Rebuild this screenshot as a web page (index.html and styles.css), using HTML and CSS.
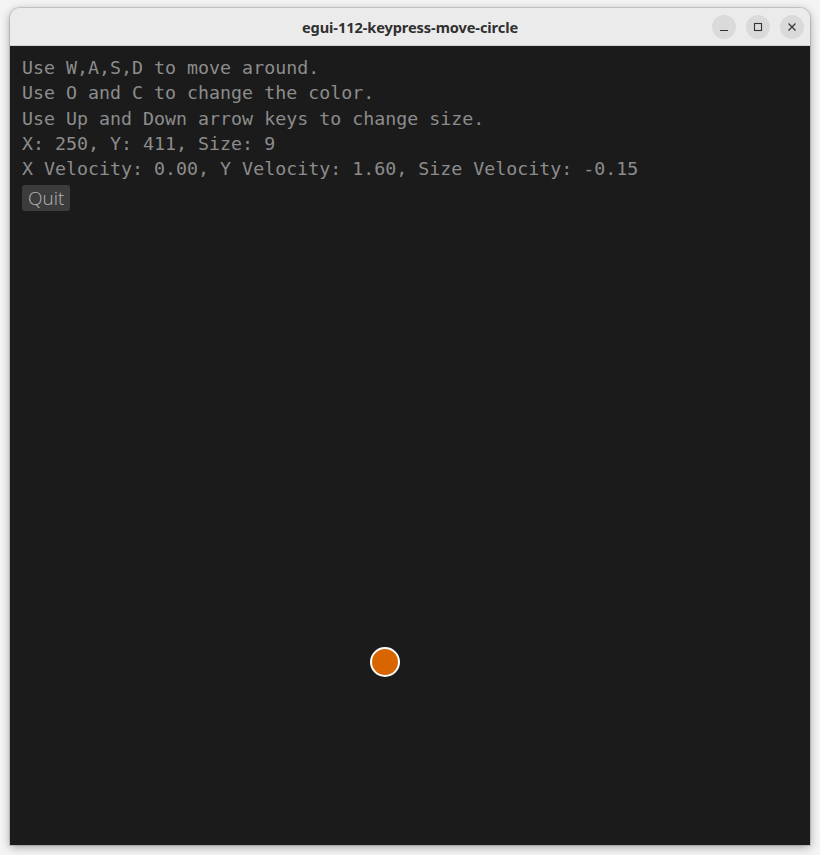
FILE: index.html
```html
<!DOCTYPE html>
<html>
<head>
<meta charset="utf-8">
<link rel="stylesheet" href="styles.css">
</head>
<body>
<div class="window">
  <div class="titlebar">
    <div class="title">egui-112-keypress-move-circle</div>
    <div class="controls">
      <div class="ctl"><svg width="10" height="10" viewBox="0 0 10 10"><path d="M1 8.5H9" stroke="#333" stroke-width="1.2"/></svg></div>
      <div class="ctl"><svg width="10" height="10" viewBox="0 0 10 10"><rect x="1.5" y="1.5" width="7" height="7" fill="none" stroke="#333" stroke-width="1.1"/></svg></div>
      <div class="ctl"><svg width="10" height="10" viewBox="0 0 10 10"><path d="M1.5 1.5L8.5 8.5M8.5 1.5L1.5 8.5" stroke="#333" stroke-width="1.2"/></svg></div>
    </div>
  </div>
  <div class="content">
    <div class="lines">
      <div>Use W,A,S,D to move around.</div>
      <div>Use O and C to change the color.</div>
      <div>Use Up and Down arrow keys to change size.</div>
      <div>X: 250, Y: 411, Size: 9</div>
      <div>X Velocity: 0.00, Y Velocity: 1.60, Size Velocity: -0.15</div>
    </div>
    <button class="quit">Quit</button>
    <div class="dot" style="left:360px; top:601px;"></div>
  </div>
</div>
</body>
</html>
```
FILE: styles.css
```css
html, body {
  margin: 0;
  padding: 0;
  background: #f4f4f4;
  width: 820px;
  height: 855px;
  overflow: hidden;
}
.window {
  position: relative;
  margin: 8px 0 0 10px;
  width: 800px;
  height: 837px;
  border-radius: 10px 10px 0 0;
  box-shadow: 0 2px 10px rgba(0,0,0,0.35), 0 0 0 1px rgba(0,0,0,0.12);
  display: flex;
  flex-direction: column;
  overflow: hidden;
}
.titlebar {
  height: 37px;
  background: #ebebeb;
  border-bottom: 1px solid #d2d2d2;
  display: flex;
  align-items: center;
  justify-content: center;
  position: relative;
  flex-shrink: 0;
}
.title {
  font-family: "Noto Sans", "DejaVu Sans", sans-serif;
  font-weight: 700;
  font-size: 14.6px;
  color: #303030;
  letter-spacing: -0.1px;
}
.controls {
  position: absolute;
  right: 6px;
  top: 7px;
  display: flex;
  gap: 10px;
}
.ctl {
  width: 24px;
  height: 24px;
  border-radius: 50%;
  background: #dadada;
  display: flex;
  align-items: center;
  justify-content: center;
}
.content {
  flex: 1;
  background: #1b1b1b;
  position: relative;
  padding: 9px 12px 0 12px;
}
.lines {
  font-family: "DejaVu Sans Mono", monospace;
  font-size: 18.3px;
  line-height: 25.3px;
  color: #8c8c8c;
}
.quit {
  margin-top: 4px;
  display: block;
  font-family: "Open Sans", "Noto Sans", sans-serif;
  font-weight: 300;
  font-size: 19px;
  line-height: 26px;
  height: 26px;
  padding: 0 6px;
  border: none;
  border-radius: 3px;
  background: #3c3c3c;
  color: #b4b4b4;
}
.dot {
  position: absolute;
  width: 26px;
  height: 26px;
  border-radius: 50%;
  background: #d96500;
  border: 2px solid #ffffff;
}
```
